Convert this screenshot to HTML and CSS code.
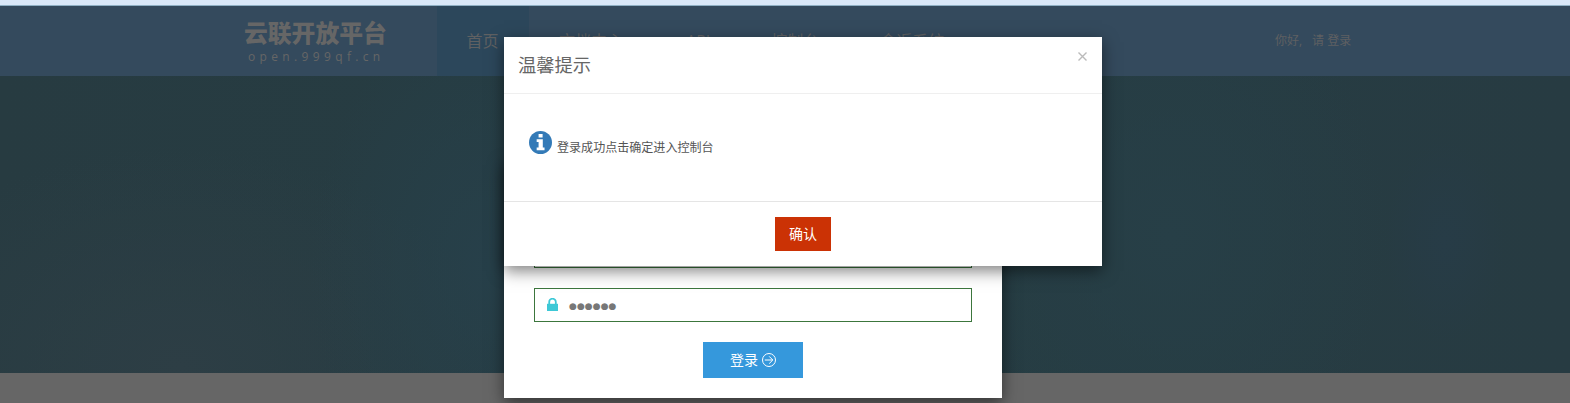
FILE: index.html
```html
<!DOCTYPE html>
<html lang="zh-CN">
<head>
<meta charset="utf-8">
<title>云联开放平台</title>
<link rel="stylesheet" href="styles.css">
</head>
<body>
<div class="page">
  <div class="chrome-strip"></div>
  <header class="header">
    <div class="logo">
      <div class="logo-name">云联开放平台</div>
      <div class="logo-url">open.999qf.cn</div>
    </div>
    <nav class="nav">
      <a class="nav-item active">首页</a>
      <a class="nav-item docs">文档中心</a>
      <a class="nav-item">API</a>
      <a class="nav-item">控制台</a>
      <a class="nav-item">金返系统</a>
    </nav>
    <div class="user"><span>你好,</span><span class="ask">请</span><a>登录</a></div>
  </header>
  <div class="hero"></div>
  <div class="footer"></div>
</div>

<section class="login">
  <div class="field"></div>
  <div class="field">
    <svg class="lock" viewBox="0 0 11 13"><path d="M0 5.8h11V13H0z"/><path d="M2.2 7V4a3.3 3.3 0 0 1 6.6 0v3" fill="none" stroke="#3dc8d6" stroke-width="1.8"/></svg>
    <span class="dots">●●●●●●</span>
  </div>
  <button class="submit">登录
    <svg class="arrow" viewBox="0 0 14 14"><circle cx="7" cy="7" r="6.5"/><path d="M2.8 7h8M7.2 3.4 10.8 7 7.2 10.6"/></svg>
  </button>
</section>

<section class="modal">
  <div class="modal-head">
    <h4 class="modal-title">温馨提示</h4>
    <svg class="close" viewBox="0 0 9 9"><path d="M.5.5l8 8M8.5.5l-8 8"/></svg>
  </div>
  <div class="modal-body">
    <svg class="info" viewBox="0 0 24 24"><circle cx="12" cy="12" r="12" fill="#337ab7"/><path d="M10 3.2h4.2v3.6H10zM8 8.6h6.4v8.6h1.8V20H8v-2.8h2v-5.8H8z" fill="#fff"/></svg>
    <span class="message">登录成功点击确定进入控制台</span>
  </div>
  <div class="modal-foot"><button class="confirm">确认</button></div>
</section>
</body>
</html>
```
FILE: styles.css
```css
* { box-sizing: border-box; }
body {
  margin: 0;
  height: 403px;
  overflow: hidden;
  position: relative;
  font-family: "Open Sans", "Noto Sans CJK SC", sans-serif;
  color: #555;
}
.page { display: flex; flex-direction: column; height: 403px; }
.chrome-strip { height: 6px; flex: none; background: #d9e8f8; border-bottom: 1px solid #8fb0c4; }
.header { display: flex; height: 70px; flex: none; background: #344a5d; color: #5f6062; }
.logo { width: 437px; padding: 11px 0 0 244px; color: #666; white-space: nowrap; }
.logo-name { font-size: 23.8px; line-height: 32px; font-weight: 900; }
.logo-url { font-size: 12px; line-height: 16px; letter-spacing: 4.35px; padding-left: 4px; }
.nav { display: flex; }
.nav-item { padding: 0 30px; font-size: 16px; line-height: 70px; white-space: nowrap; height: 70px; }
.nav-item.active { background: #2c475b; padding-left: 29.5px; padding-right: 30.5px; }
.nav-item.docs { padding-right: 33px; }
.nav-item.docs ~ .nav-item { padding-right: 31px; }
.user { display: flex; margin-left: auto; width: 295px; font-size: 12px; line-height: 70px; white-space: nowrap; }
.ask { margin: 0 3px 0 10px; }
.hero {
  height: 297px;
  flex: none;
  background:
    radial-gradient(ellipse 180px 260px at 490px 190px, #27404a, transparent),
    radial-gradient(ellipse 320px 220px at 180px 290px, #2d3e45, transparent),
    radial-gradient(ellipse 220px 260px at 1170px 160px, #273f47, transparent),
    radial-gradient(ellipse 60px 100px at 1445px 165px, #273c47, transparent),
    linear-gradient(90deg, #273b41, #263d43 50%, #273b42);
}
.footer { flex: 1; background: #666; }

.login {
  position: absolute;
  left: 504px;
  top: 160px;
  width: 498px;
  height: 238px;
  padding: 74px 30px 0;
  background: #fff;
  box-shadow: 0 5px 15px rgba(0, 0, 0, .5);
}
.field {
  display: flex;
  align-items: center;
  height: 34px;
  margin-bottom: 20px;
  padding-left: 12px;
  border: 1px solid #3c763d;
}
.lock { width: 11px; height: 13px; margin: -2px 11px 0 0; fill: #3dc8d6; }
.dots { font: 9px/12px "DejaVu Sans", sans-serif; letter-spacing: .07px; color: #777; margin-top: 1px; }
.submit {
  display: flex;
  align-items: center;
  justify-content: center;
  gap: 4px;
  width: 100px;
  height: 36px;
  margin: 0 auto;
  padding: 0 0 2px;
  border: 0;
  background: #3598dc;
  color: #fff;
  font: 14px "Noto Sans CJK SC", sans-serif;
}
.arrow { width: 14px; height: 14px; margin-top: 2px; fill: none; stroke: #fff; stroke-width: 1; }

.modal {
  position: absolute;
  left: 504px;
  top: 37px;
  width: 598px;
  height: 229px;
  background: #fff;
  box-shadow: 0 5px 15px rgba(0, 0, 0, .5);
}
.modal-head {
  display: flex;
  justify-content: space-between;
  height: 57px;
  padding: 15px 15px 0 14px;
  border-bottom: 1px solid #efefef;
}
.modal-title { margin: 0; font-size: 18.3px; font-weight: 400; line-height: 25px; color: #666; }
.close { width: 9px; height: 9px; fill: none; stroke: #bbb; stroke-width: 1.4; }
.modal-body { display: flex; height: 107px; padding: 37px 25px 0; }
.info { width: 23px; height: 23px; margin-right: 5px; }
.message { font-size: 12.05px; line-height: 17px; margin-top: 8px; color: #555; }
.modal-foot { display: flex; justify-content: center; height: 65px; padding-top: 15px; border-top: 1px solid #e5e5e5; }
.confirm {
  width: 56px;
  height: 34px;
  padding: 0 0 2px;
  border: 0;
  background: #cb3205;
  color: #fff;
  font: 14px "Noto Sans CJK SC", sans-serif;
}
```
